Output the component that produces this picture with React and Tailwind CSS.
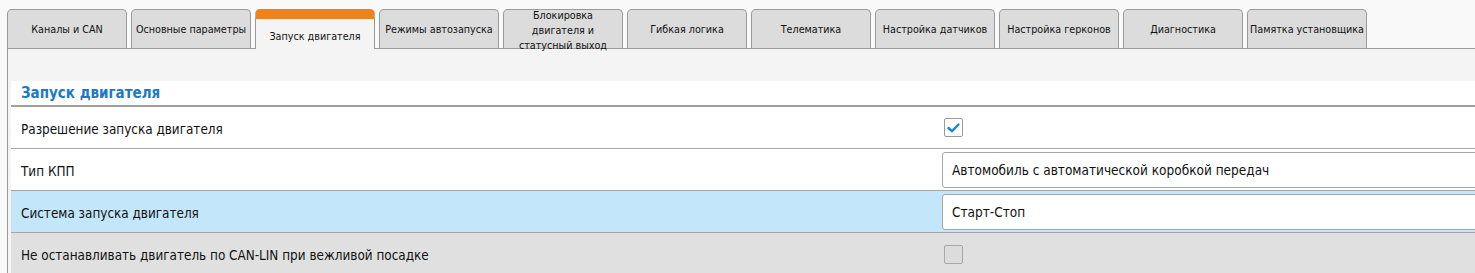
import React from "react";

const tabs = [
  "Каналы и CAN",
  "Основные параметры",
  "Запуск двигателя",
  "Режимы автозапуска",
  "Блокировка двигателя и статусный выход",
  "Гибкая логика",
  "Телематика",
  "Настройка датчиков",
  "Настройка герконов",
  "Диагностика",
  "Памятка установщика",
];

function Tab({ label, active }) {
  if (active) {
    return (
      <div className="relative z-10 -mb-px flex h-[40px] w-[120px] items-center justify-center rounded-t-[5px] border border-b-0 border-[#9a9a9a] border-t-[10px] border-t-[#f0821e] bg-[#f4f4f4] pt-[5px] text-center text-[10.7px] leading-[14px] text-[#111]">
        {label}
      </div>
    );
  }
  const narrow = label.startsWith("Блокировка");
  return (
    <div className="flex h-[39px] w-[120px] items-center justify-center overflow-visible rounded-t-[5px] border border-b-0 border-[#9a9a9a] bg-[#dcdcdc] text-center text-[10.7px] leading-[15px] text-[#111]">
      <span className={"block " + (narrow ? "w-[95px] pt-[2px]" : "whitespace-nowrap")}>{label}</span>
    </div>
  );
}

function Checkbox({ checked, disabled }) {
  return (
    <div
      className={
        "flex h-[19px] w-[19px] items-center justify-center rounded-[2px] border " +
        (disabled ? "border-[#a8a8a8] bg-[#dcdcdc]" : "border-[#9a9a9a] bg-white")
      }
    >
      {checked && (
        <svg width="13" height="10" viewBox="0 0 13 10">
          <path d="M1.5 5 L5 8.2 L11.5 1.5" fill="none" stroke="#1a86d0" strokeWidth="2.4" strokeLinecap="round" strokeLinejoin="round" />
        </svg>
      )}
    </div>
  );
}

function Select({ value }) {
  return (
    <div className="flex h-[36px] w-[560px] items-center rounded-[3px] border border-[#a6a6a6] bg-white pl-[9px] pt-[2px] text-[13.5px] text-[#111]">
      {value}
    </div>
  );
}

function Row({ label, bg, children, last }) {
  return (
    <div className={"flex h-[42px] items-center " + bg + (last ? "" : " border-b border-[#a6a6a6]")}>
      <div className="w-[931px] shrink-0 pl-[10px] pt-[5px] text-[13.4px] text-[#111]">{label}</div>
      <div className="flex items-center">{children}</div>
    </div>
  );
}

export default function App() {
  return (
    <div
      className="h-[273px] w-[1475px] overflow-hidden bg-[#f9f9f9]"
      style={{ fontFamily: '"DejaVu Sans Condensed", "DejaVu Sans", Verdana, sans-serif' }}
    >
      <div className="flex items-end gap-[4px] pl-[7px] pt-[9px]">
        {tabs.map((t) => (
          <Tab key={t} label={t} active={t === "Запуск двигателя"} />
        ))}
      </div>
      <div className="ml-[7px] border-l border-t border-[#9a9a9a] bg-[#f4f4f4] pl-[3px] pt-[32px]">
        <div className="bg-white">
          <div className="flex h-[26px] items-center border-b-2 border-[#a0a0a0] pl-[10px] pt-[1px] text-[15px] font-bold text-[#1b7ac3]">
            Запуск двигателя
          </div>
          <Row label="Разрешение запуска двигателя" bg="bg-white">
            <div className="pl-[2px]">
              <Checkbox checked />
            </div>
          </Row>
          <Row label="Тип КПП" bg="bg-white">
            <Select value="Автомобиль с автоматической коробкой передач" />
          </Row>
          <Row label="Система запуска двигателя" bg="bg-[#c3e6fa]">
            <Select value="Старт-Стоп" />
          </Row>
          <Row label="Не останавливать двигатель по CAN-LIN при вежливой посадке" bg="bg-[#e0e0e0]" last>
            <div className="pl-[2px]">
              <Checkbox disabled />
            </div>
          </Row>
        </div>
      </div>
    </div>
  );
}
